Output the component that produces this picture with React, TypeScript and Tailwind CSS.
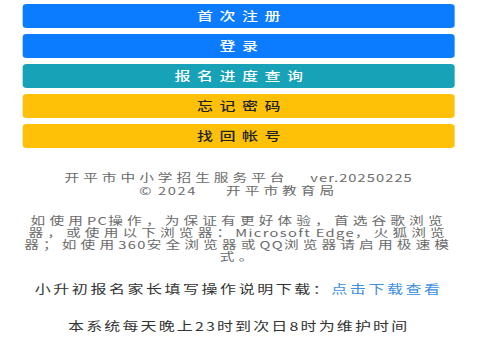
const buttons = [
	{ label: '首次注册', cls: 'bg-[#0b7bff] text-white' },
	{ label: '登录', cls: 'bg-[#0b7bff] text-white' },
	{ label: '报名进度查询', cls: 'bg-[#17a2b8] text-white' },
	{ label: '忘记密码', cls: 'bg-[#ffc107] text-[#212529]' },
	{ label: '找回帐号', cls: 'bg-[#ffc107] text-[#212529]' },
];

const App = () => {
	return (
		<div className="w-[500px] h-[342px] overflow-hidden bg-white font-['Noto_Sans_CJK_SC','Liberation_Sans',sans-serif]">
			{/* the page is shown stretched sideways, as in the screenshot */}
			<div className="w-[358px] origin-top-left scale-x-[1.3333] pt-[4px]">
				{/* Buttons */}
				<div className="flex flex-col gap-[6px] px-[17px]">
					{buttons.map((b) => (
						<button
							key={b.label}
							className={`h-[24px] rounded-[3px] flex items-center justify-center text-[12px] font-medium leading-none tracking-[4.9px] pl-[5px] ${b.cls}`}
						>
							{b.label}
						</button>
					))}
				</div>

				{/* Footer */}
				<div className="mt-[23px] text-center text-[11px] leading-[13px] tracking-[3px] text-[#6b6b6b]">
					<p>
						开平市中小学招生服务平台&nbsp;&nbsp;&nbsp;
						<span className="tracking-[0.8px]">ver.20250225</span>
					</p>
					<p>
						<span className="tracking-[1.2px]">©&nbsp;2024</span>&nbsp;&nbsp;&nbsp;&nbsp;开平市教育局
					</p>
				</div>

				<p className="mt-[17px] text-center text-[11px] leading-[12px] tracking-[3.1px] text-[#6b6b6b]">
					如使用<span className="tracking-[1px]">PC</span>操作，为保证有更好体验，首选谷歌浏览
					<br />
					器，或使用以下浏览器：<span className="tracking-[1px]">Microsoft Edge</span>，火狐浏览
					<br />
					器；如使用<span className="tracking-[1px]">360</span>安全浏览器或<span className="tracking-[1px]">QQ</span>浏览器请启用极速模
					<br />
					式。
				</p>

				{/* Download */}
				<p className="mt-[19px] text-center text-[12px] leading-[16px] tracking-[1.9px] text-[#333]">
					小升初报名家长填写操作说明下载：<span className="text-[#3d8fe0]">点击下载查看</span>
				</p>

				<p className="mt-[21px] text-center text-[12px] leading-[16px] tracking-[1.6px] text-[#333]">
					本系统每天晚上23时到次日8时为维护时间
				</p>
			</div>
		</div>
	);
};

export default App;
